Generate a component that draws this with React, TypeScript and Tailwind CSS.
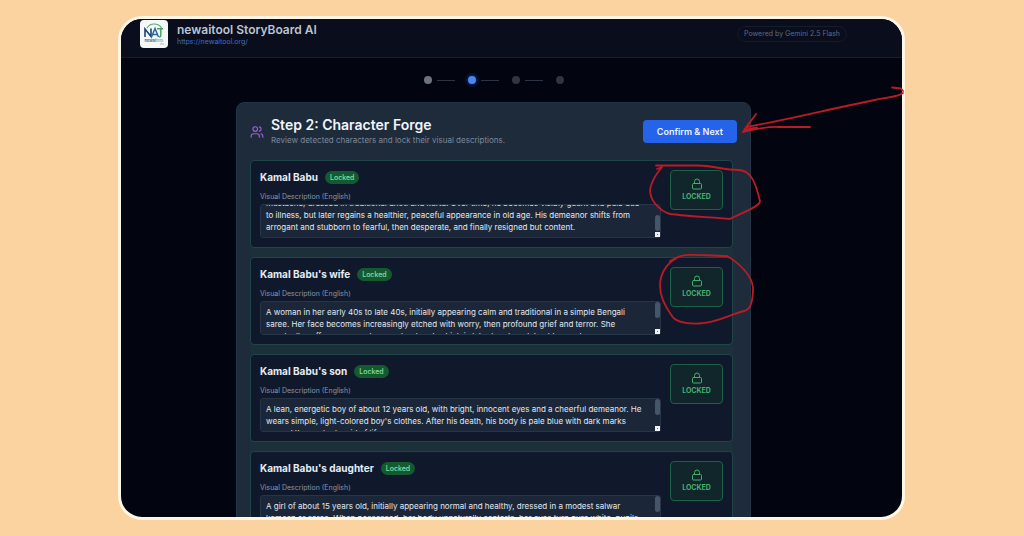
import { useEffect, useRef } from "react";
import { Lock, Users } from "lucide-react";

type Character = {
  id: string;
  name: string;
  description: string;
  scrolledToEnd?: boolean;
};

const characters: Character[] = [
  {
    id: "kamal",
    name: "Kamal Babu",
    description:
      "mustache, dressed in traditional dhoti and kurta. Over time, he becomes visibly gaunt and pale due to illness, but later regains a healthier, peaceful appearance in old age. His demeanor shifts from arrogant and stubborn to fearful, then desperate, and finally resigned but content.",
    scrolledToEnd: true,
  },
  {
    id: "wife",
    name: "Kamal Babu's wife",
    description:
      "A woman in her early 40s to late 40s, initially appearing calm and traditional in a simple Bengali saree. Her face becomes increasingly etched with worry, then profound grief and terror. She eventually suffers a severe burn on her hand, which is later bandaged. In old age, she appears",
  },
  {
    id: "son",
    name: "Kamal Babu's son",
    description:
      "A lean, energetic boy of about 12 years old, with bright, innocent eyes and a cheerful demeanor. He wears simple, light-colored boy's clothes. After his death, his body is pale blue with dark marks around the neck, devoid of life.",
  },
  {
    id: "daughter",
    name: "Kamal Babu's daughter",
    description:
      "A girl of about 15 years old, initially appearing normal and healthy, dressed in a modest salwar kameez or saree. When possessed, her body unnaturally contorts, her eyes turn pure white, pupils",
  },
];

function Logo() {
  return (
    <span className="flex size-7 flex-col items-center justify-center rounded-[4px] bg-[#f5f8f8]">
      <svg viewBox="0 0 28 28" className="size-7" role="img" aria-label="NAT">
        <path d="M7 8C10 3 18 2.500 21.500 8" fill="none" stroke="#57a773" strokeWidth="1.100" />
        <path d="M5 17V9L11 16.500V8.500" fill="none" stroke="#1d4473" strokeWidth="1.600" />
        <path d="M11.500 17L15 8.500L18.500 17M13 14.500H17.500" fill="none" stroke="#2b6d96" strokeWidth="1.500" />
        <path d="M17 8.800H23M20.800 8.800V15.500Q20.800 17 19 17" fill="none" stroke="#4fa35f" strokeWidth="1.500" />
        <text x="4.500" y="22" fontSize="4" fontFamily="Inter, sans-serif" fontWeight="600" fill="#46596b">
          newai
          <tspan fill="#8ca8a0">tool</tspan>
        </text>
        <path d="M20 24H24" stroke="#9aa8ad" strokeWidth="0.800" />
      </svg>
    </span>
  );
}

function Steps() {
  const dots = [
    "bg-[#6b7280]",
    "bg-[#4a86ee] shadow-[0_0_5px_#1d4fc0]",
    "bg-[#2f3542]",
    "bg-[#2f3542]",
  ];
  return (
    <ol className="flex items-center justify-center">
      {dots.map((dot, i) => (
        <li key={i} className="flex items-center">
          {i > 0 && <span className="mr-[13px] ml-[5px] h-px w-[18px] bg-[#2c3444]" />}
          <span className={`size-2 rounded-full ${dot}`} />
        </li>
      ))}
    </ol>
  );
}

function CharacterCard({ character }: { character: Character }) {
  const box = useRef<HTMLTextAreaElement>(null);

  useEffect(() => {
    if (character.scrolledToEnd && box.current) {
      box.current.scrollTop = box.current.scrollHeight;
    }
  }, [character.scrolledToEnd]);

  return (
    <li className="flex items-start gap-[9px] rounded-[4px] border border-[#1f4548] bg-[#10192b] p-[9px]">
      <div className="min-w-0 flex-1">
        <div className="flex h-[14px] items-center gap-[7px]">
          <h3 className="text-[10px] leading-[14px] font-bold text-[#e8edf4]">{character.name}</h3>
          <span className="rounded-full bg-[#14592f] px-[5px] text-[7px] leading-[13px] font-medium text-[#86e0a4]">
            Locked
          </span>
        </div>
        <label htmlFor={character.id} className="mt-[7px] block text-[7px] leading-[11px] text-[#8a96a9]">
          Visual Description (English)
        </label>
        <div className="relative mt-[2px]">
          <textarea
            ref={box}
            id={character.id}
            readOnly
            defaultValue={character.description}
            className="block h-[34px] w-full resize-none overflow-y-scroll rounded-[3px] border border-[#263547] bg-[#1b2738] py-1 pr-[15px] pl-[5px] text-[8px] leading-[12px] text-[#e2e8f0] outline-none [scrollbar-width:none]"
          />
          <span
            className={`absolute right-px h-4 w-[5px] rounded-full bg-[#475569] ${
              character.scrolledToEnd ? "top-[11px]" : "top-px"
            }`}
          />
          <span className="absolute right-px bottom-px flex size-[5px] items-center justify-center bg-[#eef2f6]">
            <span className="size-px bg-[#64748b]" />
          </span>
        </div>
      </div>
      <button
        type="button"
        className="flex h-10 w-[53px] flex-col items-center justify-center gap-[2px] rounded-[4px] border border-[#1d6146] bg-[#10262b] text-[#43b06d]"
      >
        <Lock className="size-3" strokeWidth={2} />
        <span className="text-[7px] leading-[10px] font-bold">LOCKED</span>
      </button>
    </li>
  );
}

function Annotations() {
  return (
    <svg
      viewBox="0 0 1024 536"
      aria-hidden="true"
      className="pointer-events-none absolute inset-0 size-full"
      fill="none"
      stroke="#bd1a28"
      strokeWidth="1.800"
      strokeLinecap="round"
      strokeLinejoin="round"
    >
      <path d="M892 87.500L901 88.500L903 91M903 93C898 97 888 97 870 101C830 109 790 119 747 127" />
      <path d="M756 114L744 130L757 127.500M743 132C756 129 765 126.500 778 127H810" />
      <path d="M656 165.500H698C712 165.500 724 170 738 170C750 170 755 180 760 201C760 207 741 213 730 219C712 217 692 217 676 214.500C664 215 650 203 650 190C651 182 657 173 662 167L657 169" />
      <path d="M670 261L678 257C686 253 700 255.500 727 256C739 263 752 275 753 288C753 300 751 310 744 311C731 314 717 323 699 323.500C684 324 675 321 672 316C664 305 660 296 660 286C660 273 667 263 677 258L670 261" />
    </svg>
  );
}

export default function App() {
  return (
    <div className="relative h-screen overflow-hidden bg-[#fbd3a0] py-4 pr-[119px] pl-[118px] font-['Inter',sans-serif]">
      <div className="flex h-full flex-col overflow-hidden rounded-[24px] border-[3px] border-[#fff6e6] bg-[#02040f]">
        <header className="flex shrink-0 items-center justify-between border-b border-[#151d2e] bg-[#090d1c] pt-px pr-[55px] pb-[9px] pl-[19px]">
          <div className="flex items-center gap-[9px]">
            <Logo />
            <div>
              <h1 className="text-[12px] leading-[15px] font-semibold text-[#bcc4d0]">newaitool StoryBoard AI</h1>
              <a href="https://newaitool.org/" className="block text-[7px] leading-[10px] text-[#3f70c4]">
                https://newaitool.org/
              </a>
            </div>
          </div>
          <span className="rounded-full border border-[#151c2b] px-[6px] text-[7px] leading-[14px] text-[#5f6b80]">
            Powered by Gemini 2.5 Flash
          </span>
        </header>
        <main className="min-h-0 flex-1 pt-[18px] pr-[151px] pl-[115px]">
          <Steps />
          <section className="mt-[18px] rounded-[8px] border border-[#253346] bg-[#1e2b3b] p-[13px]">
            <div className="flex items-center justify-between">
              <div className="flex items-center gap-[7px]">
                <Users className="size-[14px] text-[#9d5fd8]" />
                <div>
                  <h2 className="text-[14px] leading-[18px] font-semibold text-[#f1f5f9]">Step 2: Character Forge</h2>
                  <p className="text-[8px] leading-[13px] text-[#7c899d]">
                    Review detected characters and lock their visual descriptions.
                  </p>
                </div>
              </div>
              <button
                type="button"
                className="h-[23px] rounded-[4px] bg-[#2563eb] px-[14px] text-[9px] font-semibold text-[#eaf1ff]"
              >
                Confirm &amp; Next
              </button>
            </div>
            <ul className="mt-[13px] flex flex-col gap-[9px] bg-[#1c303a] mr-1 rounded-[4px]">
              {characters.map((character) => (
                <CharacterCard key={character.id} character={character} />
              ))}
            </ul>
          </section>
        </main>
      </div>
      <Annotations />
    </div>
  );
}
